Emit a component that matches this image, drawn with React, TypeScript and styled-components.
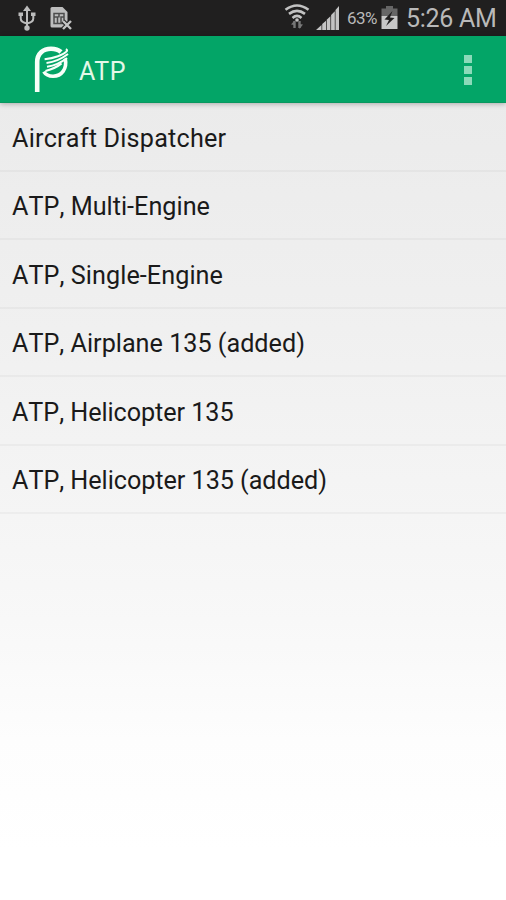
import React from "react";
import styled, { createGlobalStyle } from "styled-components";

const GlobalStyle = createGlobalStyle`
  * { box-sizing: border-box; }
  body { margin: 0; background: #fff; font-family: Roboto, "Noto Sans", sans-serif; }
`;

const Screen = styled.div`
  width: 506px;
  height: 900px;
  overflow: hidden;
  display: flex;
  flex-direction: column;
  background: linear-gradient(#ebebeb 100px, #efefef 290px, #f4f4f4 480px, #f8f8f8 620px, #fdfdfd 740px, #ffffff 850px);
`;

const StatusBar = styled.header`
  height: 36px;
  flex: none;
  display: flex;
  justify-content: space-between;
  padding: 0 10px 0 18px;
  background: #201f1f;
  color: #b9b9b9;
  svg { display: block; flex: none; }
`;

const StatusGroup = styled.div<{ $gap: number }>`
  display: flex;
  gap: ${(p) => p.$gap}px;
`;

const Percent = styled.span`
  width: 34px;
  margin-left: 7px;
  font-size: 17px;
  line-height: 36px;
  letter-spacing: -0.5px;
  white-space: nowrap;
`;

const Clock = styled.time`
  width: 90px;
  margin-left: 8px;
  font-size: 25px;
  line-height: 38px;
  letter-spacing: -0.3px;
  white-space: nowrap;
`;

const ActionBar = styled.div`
  height: 67px;
  flex: none;
  display: flex;
  align-items: center;
  padding: 0 34px 0 32px;
  background: #03a567;
  border-bottom: 1px solid #08985f;
  box-shadow: 0 1px 5px rgba(0, 0, 0, 0.28);
`;

const Title = styled.h1`
  flex: 1;
  margin: 5px 0 0 7px;
  font-size: 25px;
  font-weight: 400;
  line-height: 30px;
  letter-spacing: 0.5px;
  color: #e4f8e8;
`;

const Overflow = styled.button`
  display: flex;
  flex-direction: column;
  gap: 3px;
  padding: 0;
  margin-top: 1px;
  border: 0;
  background: none;
`;

const Dot = styled.span`
  width: 8px;
  height: 8px;
  background: #8bdab9;
`;

const List = styled.ul`
  margin: 0;
  padding: 0;
  list-style: none;
`;

const Row = styled.li<{ $tracking: number }>`
  height: 68.5px;
  padding: 1.8px 12px 0;
  border-bottom: 2px solid rgba(0, 0, 0, 0.03);
  font-size: 25.2px;
  font-kerning: none;
  letter-spacing: ${(p) => p.$tracking}px;
  line-height: 67px;
  color: #1a1a1a;
  white-space: nowrap;
`;

const UsbIcon = () => (
  <svg width="18" height="36" viewBox="0 0 18 36" fill="none" stroke="#bcbcbc" strokeWidth="2">
    <path d="M9 10V27M2.7 15V18.5Q2.7 22.2 9 23.5Q15.3 22.2 15.3 18.5V15" />
    <path d="M9 5.5L13 11H5Z" fill="#bcbcbc" stroke="none" />
    <circle cx="9" cy="28" r="2.7" fill="#bcbcbc" stroke="none" />
    <path d="M.5 12.5H5V16H.5ZM13 12.5H17.5V16H13Z" fill="#bcbcbc" stroke="none" />
  </svg>
);

const SimIcon = () => (
  <svg width="24" height="36" viewBox="0 0 24 36" fill="none">
    <path d="M2 7H12.5L17.5 12V27.5H2Q.5 27.5 .5 26V8.5Q.5 7 2 7Z" fill="#bdbdbd" />
    <path d="M4 13.5H14V23.5H4ZM4.5 17H7.5V23M14 17H11V23M9 13.5V17.5" stroke="#4c4c4c" strokeWidth="1.5" />
    <path d="M13 21L21 29M21 21L13 29" stroke="#201f1f" strokeWidth="4.5" />
    <path d="M13 21L21 29M21 21L13 29" stroke="#c4c4c4" strokeWidth="2.4" />
  </svg>
);

const WifiIcon = () => (
  <svg width="26" height="36" viewBox="0 0 26 36" fill="none" stroke="#c2c2c2" strokeWidth="2.6">
    <path d="M1.5 9.8Q13 1.2 24.5 9.8M5 13.9Q13 7.8 21 13.9M8.5 17.9Q13 14 17.5 17.9" />
    <circle cx="13" cy="20" r="1.8" fill="#c2c2c2" stroke="none" />
    <path d="M10.5 28V21M15.5 21V28" stroke="#777" strokeWidth="2.4" />
    <path d="M7 24.5L10.5 20.5V25ZM19 24.5L15.5 29V24Z" fill="#777" stroke="none" />
  </svg>
);

const SignalIcon = () => (
  <svg width="24" height="36" viewBox="0 0 24 36" fill="#c4c4c4">
    <path d="M0 30L5.5 25V30ZM6.2 24L10 20.8V30H6.2ZM10.7 19.8L14.4 16.2V30H10.7ZM15.1 15L18.8 11.2V30H15.1ZM19.5 10L23 6V30H19.5Z" />
  </svg>
);

const BatteryIcon = () => (
  <svg width="17" height="36" viewBox="0 0 17 36">
    <path d="M5 6H12V8.5H16.5V16H.5V8.5H5Z" fill="#666" />
    <path d="M.5 16H16.5V29H.5Z" fill="#c7c7c7" />
    <path d="M11.5 11L3.5 19.5L8 20L5 26L13.5 18L9 17.5Z" fill="#201f1f" />
  </svg>
);

const Logo = () => (
  <svg width="40" height="66" viewBox="0 0 40 66" fill="none" stroke="#f8fff9">
    <path d="M5.2 56V26C5.2 17.4 11.2 12.8 19 12.8C23.5 12.8 26.6 13.8 29 16" strokeWidth="4.6" />
    <path d="M33.2 22.5C35.4 32.5 29.8 40.2 21 40.2C16.8 40.2 13.6 38.6 11.8 35.6" strokeWidth="3.6" />
    <path d="M12.6 23.2Q20 22.4 26 20.2T34.4 15.6Q36 14 33.8 13.2" strokeWidth="2" />
    <path d="M14.5 27Q26 25.6 36 18M15 30.8Q26 29.2 35 22" strokeWidth="2.1" />
    <path d="M13.5 35Q23.5 32.4 29.5 27.4" strokeWidth="2.3" />
  </svg>
);

const courses = [
  { name: "Aircraft Dispatcher", tracking: 0.2 },
  { name: "ATP, Multi-Engine", tracking: 0.02 },
  { name: "ATP, Single-Engine", tracking: 0.06 },
  { name: "ATP, Airplane 135 (added)", tracking: 0 },
  { name: "ATP, Helicopter 135", tracking: -0.06 },
  { name: "ATP, Helicopter 135 (added)", tracking: -0.04 },
];

export default function App() {
  return (
    <Screen>
      <GlobalStyle />
      <StatusBar>
        <StatusGroup $gap={14}>
          <UsbIcon />
          <SimIcon />
        </StatusGroup>
        <StatusGroup $gap={0}>
          <StatusGroup $gap={6}>
            <WifiIcon />
            <SignalIcon />
          </StatusGroup>
          <Percent>63%</Percent>
          <BatteryIcon />
          <Clock>5:26 AM</Clock>
        </StatusGroup>
      </StatusBar>
      <ActionBar>
        <Logo />
        <Title>ATP</Title>
        <Overflow aria-label="More options">
          <Dot />
          <Dot />
          <Dot />
        </Overflow>
      </ActionBar>
      <List>
        {courses.map(({ name, tracking }) => (
          <Row key={name} $tracking={tracking}>{name}</Row>
        ))}
      </List>
    </Screen>
  );
}
